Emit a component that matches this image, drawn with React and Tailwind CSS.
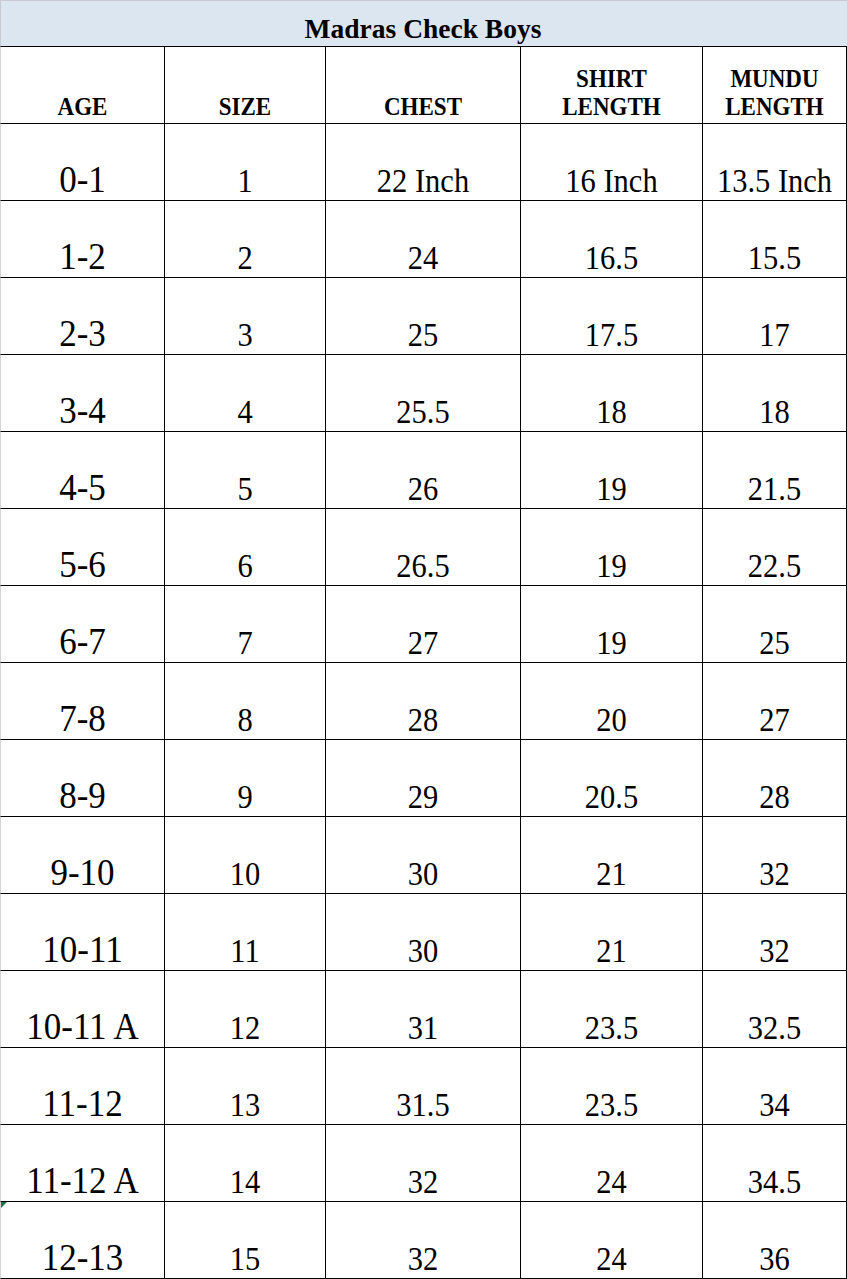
const rows = [
  ["0-1", "1", "22 Inch", "16 Inch", "13.5 Inch"],
  ["1-2", "2", "24", "16.5", "15.5"],
  ["2-3", "3", "25", "17.5", "17"],
  ["3-4", "4", "25.5", "18", "18"],
  ["4-5", "5", "26", "19", "21.5"],
  ["5-6", "6", "26.5", "19", "22.5"],
  ["6-7", "7", "27", "19", "25"],
  ["7-8", "8", "28", "20", "27"],
  ["8-9", "9", "29", "20.5", "28"],
  ["9-10", "10", "30", "21", "32"],
  ["10-11", "11", "30", "21", "32"],
  ["10-11 A", "12", "31", "23.5", "32.5"],
  ["11-12", "13", "31.5", "23.5", "34"],
  ["11-12 A", "14", "32", "24", "34.5"],
  ["12-13", "15", "32", "24", "36"],
];

const headers = [
  ["AGE"],
  ["SIZE"],
  ["CHEST"],
  ["SHIRT", "LENGTH"],
  ["MUNDU", "LENGTH"],
];

const cols = "grid grid-cols-[165px_161px_195px_182px_144px]";

const App = () => {
  return (
    <div className="w-[847px] h-[1279px] bg-white text-black [font-family:'Liberation_Serif','Times_New_Roman',serif] overflow-hidden">
      {/* title */}
      <div className="h-[47px] bg-[#dce6f1] border-t border-l border-[#c8ccd2] border-b-black border-b flex items-end justify-center pr-[2px]">
        <span className="text-[27.5px] font-bold leading-none pb-[4px]">Madras Check Boys</span>
      </div>

      {/* header row */}
      <div className={cols}>
        {headers.map((h, i) => (
          <div
            key={i}
            className={`h-[77px] border-b border-r border-b-black border-r-black flex items-end justify-center ${i === 0 ? "border-l border-l-[#d4d4d4]" : ""}`}
          >
            <span className="inline-block origin-bottom scale-y-[1.1] text-[23px] font-bold leading-[26px] text-center pb-[1px]">
              {h.map((line) => (
                <span key={line} className="block">{line}</span>
              ))}
            </span>
          </div>
        ))}
      </div>

      {/* data rows */}
      {rows.map((r, ri) => (
        <div key={ri} className={cols}>
          {r.map((v, ci) => (
            <div
              key={ci}
              className={`relative h-[77px] border-b border-r border-b-black border-r-black flex items-end justify-center ${ci === 0 ? "border-l border-l-[#d4d4d4]" : ""}`}
            >
              {ri === rows.length - 1 && ci === 0 && (
                <span className="absolute left-0 top-0 w-0 h-0 border-t-[6px] border-t-[#217346] border-r-[6px] border-r-transparent" />
              )}
              <span
                className={`inline-block origin-bottom scale-y-[1.1] leading-none ${ci === 0 ? "text-[35px] pb-[1px]" : "text-[30.5px] pb-[2px]"}`}
              >
                {v}
              </span>
            </div>
          ))}
        </div>
      ))}
    </div>
  );
};

export default App;
